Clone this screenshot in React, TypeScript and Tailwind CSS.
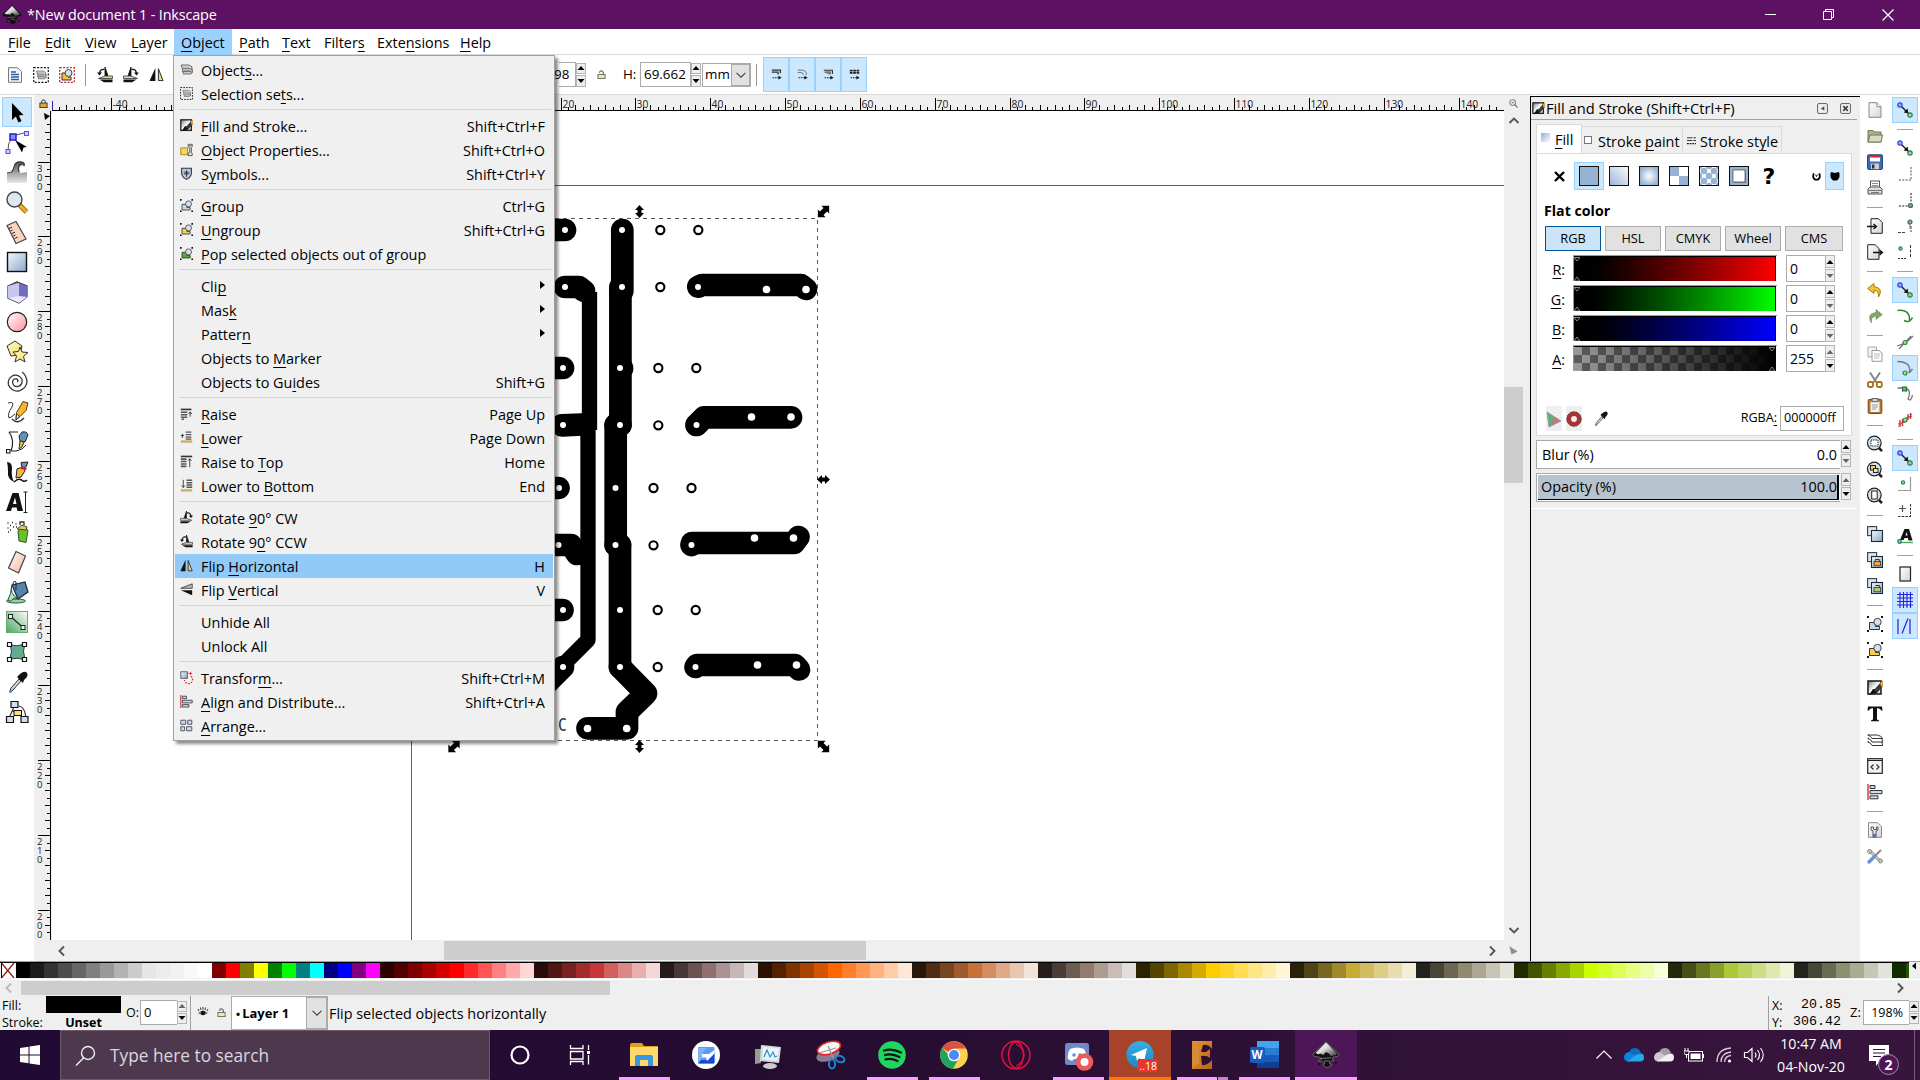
import React from "react";

type Kids = { children?: React.ReactNode };

function Svg({ s = 16, vb = 16, className = "", children }: { s?: number; vb?: number; className?: string } & Kids) {
  return (
    <svg width={s} height={s} viewBox={`0 0 ${vb} ${vb}`} className={"block shrink-0 overflow-visible " + className} fill="none">
      {children}
    </svg>
  );
}

/* Label with a mnemonic: the character after "_" is underlined. */
function Mn({ t }: { t: string }) {
  const i = t.indexOf("_");
  if (i < 0) return <span>{t}</span>;
  return (
    <span>
      {t.slice(0, i)}
      <span className="underline decoration-1 underline-offset-[3px] [text-decoration-skip-ink:none]">{t[i + 1]}</span>
      {t.slice(i + 2)}
    </span>
  );
}

/* ---------- shared gradients ---------- */
function Defs() {
  return (
    <svg width="0" height="0" className="absolute">
      <defs>
        <linearGradient id="blu" x1="0" y1="0" x2="1" y2="1"><stop offset="0" stopColor="#f4f8fc" /><stop offset="1" stopColor="#86a9c9" /></linearGradient>
        <linearGradient id="blu2" x1="0" y1="1" x2="1" y2="0"><stop offset="0" stopColor="#97b3d3" /><stop offset="1" stopColor="#fff" /></linearGradient>
        <radialGradient id="rad"><stop offset="0" stopColor="#fff" /><stop offset="1" stopColor="#97b3d3" /></radialGradient>
        <linearGradient id="pink" x1="0" y1="0" x2="1" y2="1"><stop offset="0" stopColor="#fff" /><stop offset="1" stopColor="#ff8f9a" /></linearGradient>
        <linearGradient id="yel" x1="0" y1="0" x2="1" y2="1"><stop offset="0" stopColor="#fffde0" /><stop offset="1" stopColor="#f5d94e" /></linearGradient>
        <linearGradient id="grn" x1="1" y1="0" x2="0" y2="1"><stop offset="0" stopColor="#fff" /><stop offset="1" stopColor="#4aa55e" /></linearGradient>
        <linearGradient id="mesh" x1="0" y1="0" x2="1" y2="1"><stop offset="0" stopColor="#6b9cc0" /><stop offset="1" stopColor="#5cb85f" /></linearGradient>
        <linearGradient id="peach" x1="0" y1="0" x2="1" y2="1"><stop offset="0" stopColor="#fff" /><stop offset="1" stopColor="#f2b49a" /></linearGradient>
        <linearGradient id="gry" x1="0" y1="0" x2="0" y2="1"><stop offset="0" stopColor="#555" /><stop offset="1" stopColor="#e8e8e8" /></linearGradient>
        <linearGradient id="page" x1="0" y1="0" x2="1" y2="1"><stop offset="0" stopColor="#fff" /><stop offset="1" stopColor="#d4d4d0" /></linearGradient>
        <linearGradient id="ink" x1="0" y1="0" x2="1" y2="1"><stop offset="0" stopColor="#fff" /><stop offset=".45" stopColor="#ddd" /><stop offset="1" stopColor="#333" /></linearGradient>
        <linearGradient id="pen" x1="0" y1="0" x2="1" y2="1"><stop offset="0" stopColor="#777" /><stop offset=".5" stopColor="#fff" /><stop offset="1" stopColor="#ccc" /></linearGradient>
        <linearGradient id="tele" x1="0" y1="0" x2="0" y2="1"><stop offset="0" stopColor="#37aee2" /><stop offset="1" stopColor="#1e88c7" /></linearGradient>
        <linearGradient id="eag" x1="0" y1="0" x2="1" y2="1"><stop offset="0" stopColor="#e8932f" /><stop offset="1" stopColor="#b5651d" /></linearGradient>
      </defs>
    </svg>
  );
}

function InkLogo({ s, rim }: { s: number; rim: string }) {
  return (
    <Svg s={s} vb={28}>
      <path d="M14 1 L27 13 Q27 16 21 16 L20 18 Q24 19 20 20 L17 22 L20 24 L15 27 L11 24 L13 22 L9 20 L6 20 Q7 18 10 18 L7 16 Q1 16 1 13 Z" fill="#111" stroke={rim} strokeWidth="0.6" />
      <path d="M14 1.500 L3.500 12 Q6 14 9 12.500 L11 14 L14 11 L17 12.500 L19 15 L24 14 L25 12.500 Z" fill="url(#ink)" />
      <path d="M8 17.500 L19 16.800 M12 20 h6" stroke="#777" strokeWidth="1" />
      <circle cx="24" cy="22" r="1" fill="#111" /><circle cx="7" cy="23" r="1" fill="#111" />
    </Svg>
  );
}

/* ---------- small 16px icons ---------- */
const node = (x: number, y: number, c = "#2e8b3d", f = "#9fdca6", r = 2) => <circle cx={x} cy={y} r={r} fill={f} stroke={c} strokeWidth="1.2" />;
const lens = (inner: React.ReactNode) => (
  <>
    <path d="M11 11 L15 15.2" stroke="#222" strokeWidth="2.6" />
    <circle cx="7.3" cy="7" r="6.8" fill="#cfe0f0" stroke="#222" strokeWidth="1.2" />
    {inner}
  </>
);
const twoSq = (inner?: React.ReactNode) => (
  <>
    <rect x=".6" y=".6" width="9" height="9" fill="#dbe6f1" stroke="#333f4d" strokeWidth="1.1" />
    <rect x="4.5" y="4.5" width="11" height="11" fill="url(#blu)" stroke="#1f2933" strokeWidth="1.1" />
    {inner}
  </>
);
const corners = <path d="M0 0h2v2H0zM14 0h2v2h-2zM0 14h2v2H0zM14 14h2v2h-2z" fill="#111" />;
const grp = (f: string) => (
  <>
    {corners}
    <path d="M2.5 6.5h6v4h4v3h-10z" fill={f} stroke="#333" strokeWidth="1" />
    <circle cx="10.5" cy="6" r="3.7" fill="#d3e0ee" stroke="#444" strokeWidth="1" />
  </>
);
const stack = (
  <>
    <path d="M4 10.500v3h9l2-1.500v-3" fill="#ccc" stroke="#555" />
    <path d="M3 7v3.500h9.500l2.500 1V7" fill="#ddd" stroke="#555" />
    <path d="M1.500 2.500h9.500l3.500 2v3.500l-2-1H3z" fill="#eee" stroke="#444" />
    <path d="M3 5h9M4 9h9" stroke="#888" />
  </>
);
const fillPen = (
  <>
    <rect x="1" y="1" width="13" height="13" fill="url(#pen)" stroke="#222" strokeWidth="1.6" />
    <path d="M2 15 L6 9 L10 9 L10 13 Z" fill="#111" />
    <path d="M7 10 L13 3 L16 1 L16 6 L10 13 Z" fill="#3a3a32" />
    <path d="M13 3 L16 .5 V6 L14.5 7 Z" fill="#e2a52c" />
  </>
);
const rot = (flip: boolean) => (
  <g transform={flip ? "translate(16 0) scale(-1 1)" : undefined}>
    <path d="M8 0V10.500H11.500z" fill="#111" stroke="#111" strokeWidth=".8" />
    <path d="M1.500 11.500L8 9h7.500v2.500z" fill={flip ? "#cdd8e4" : "#ead38b"} stroke="#333" strokeWidth=".8" />
    <path d="M2.500 12.500h13v2.700H7z" fill="#111" />
    <path d="M7.500 2.500Q3 1.500 2.500 6.500" stroke="#111" strokeWidth="1.300" /><path d="M0 5.500h5L2.500 8.500z" fill="#111" />
  </g>
);
const magnetPair = (
  <>
    <path d="M4 4 L12 12" stroke="#111" strokeWidth="1.3" /><path d="M11.300 11.300 L10.600 6.600 L6.600 10.600z" fill="#111" />
    {node(3, 3, "#3344dd", "#9aa4ff", 2.2)}{node(13, 13, "#2d8049", "#9fd0b0", 2.2)}
  </>
);
const dashCorner = (c: string) => <path d="M14 1V14H1" stroke={c} strokeWidth="1.5" strokeDasharray="2 1.3" />;

const IC: Record<string, React.ReactNode> = {
  objects: stack,
  selsets: <><rect x=".7" y=".7" width="14.6" height="14.6" stroke="#222" strokeWidth="1.2" strokeDasharray="2 1.4" /><g transform="translate(2.5 2.3) scale(.7)">{stack}</g></>,
  fill: fillPen,
  props: <><rect x="1" y="6" width="8.5" height="8.5" fill="#f4d35e" stroke="#9a7b14" /><path d="M10 1.5v3l2 1v6l-2 1v3h5v-3l-1-1v-6l1-1v-3h-1.5v2H12V1.5z" fill="#ddd" stroke="#444" /></>,
  symbols: <><path d="M2 1.5h12v7Q13 13 8 15.2 3 13 2 8.500z" fill="#b9c9da" stroke="#334" strokeWidth="1.3" /><path d="M8 4v8M4.500 7.500h7M6 5.500l4 4M10 5.500l-4 4" stroke="#334" strokeWidth="1.2" /></>,
  group: grp("#c5d7e8"), ungroup: grp("#f5d04e"), pop: grp("#4fae3a"),
  raise: <><path d="M1 3h13" stroke="#333" strokeWidth="2" /><path d="M1 6.5h8M1 9.500h8M1 12.500h8M2 15h3" stroke="#555" strokeWidth="1.8" /><path d="M12.500 12V6.500M10.500 8.500l2-2.500 2 2.500" stroke="#222" /></>,
  lower: <><path d="M1 13h14" stroke="#c9b26b" strokeWidth="3" /><path d="M7 1.500h7M7 4.500h7M7 7.500h7M7 10h7" stroke="#555" strokeWidth="1.6" /><path d="M1 5.500h4M3 3.500v5" stroke="#222" /></>,
  top: <><path d="M1 1.800h14" stroke="#333" strokeWidth="2" /><path d="M1 5h7M1 8h7M1 11h7M1 14h7" stroke="#555" strokeWidth="2" /><path d="M12 15V5M10 7l2-2.500L14 7" stroke="#222" /></>,
  bottom: <><path d="M1 14h14" stroke="#c9b26b" strokeWidth="3" /><path d="M8 1.500h7M8 4.500h7M8 7.500h7M8 10.200h7" stroke="#555" strokeWidth="1.8" /><path d="M4 1v9M2 8l2 2.500L6 8" stroke="#222" /></>,
  cw: rot(true), ccw: rot(false),
  fliph: <><path d="M6.800 1v14H0.500z" fill="#111" /><path d="M10 1.800v12.700h5z" fill="#ead38b" stroke="#222" /></>,
  flipv: <><path d="M15 1v5.500H1z" fill="#bbb" stroke="#333" /><path d="M15 15V9H1z" fill="#111" /></>,
  transform: <><rect x="1" y="1" width="8" height="8" fill="url(#blu)" stroke="#445" /><path d="M13.500 6.500A5 5 0 1 1 5.500 11" stroke="#d22" strokeWidth="1.400" strokeDasharray="2 1.500" /><path d="M10.500 3h4.500M13 1v4" stroke="#d22" /></>,
  align: <><path d="M1 0v16" stroke="#c33" strokeWidth="1.400" /><path d="M3 1.500h5v3H3zM3 6.500h12v3.200H3zM3 11.800h8v3H3z" fill="#cfdbe8" stroke="#333" /></>,
  arrange: <path d="M1 1.500h6v5H1zM9.500 1.500h5v5h-5zM1 9.500h4.500v5H1zM8 9.500h6.500v5H8z" fill="#cfdbe8" stroke="#556" strokeWidth="1.200" />,
  newdoc: <><path d="M2 .7h8L14 4.700V15.300H2z" fill="url(#page)" stroke="#888" /><path d="M10 .7V4.700h4" stroke="#888" fill="#fff" /></>,
  open: <><path d="M1 2.500h5l1 1.500h7v10H1z" fill="#a9b58c" stroke="#6e7758" /><path d="M3 7h12.500l-1.500 7H1z" fill="#d5dcc2" stroke="#6e7758" /></>,
  save: <><rect x=".6" y=".8" width="14.800" height="14.600" rx="1" fill="#3a6fb5" stroke="#1c3d6e" /><rect x="3" y="1" width="10" height="6.500" fill="#fff" /><path d="M3 1h10v2.500H3z" fill="#d22" /><rect x="4" y="9.500" width="8" height="5.700" fill="#ccc" /><rect x="5" y="10.500" width="2.400" height="4" fill="#234" /></>,
  print: <><rect x="3.500" y="1" width="9" height="8" fill="#fff" stroke="#555" /><path d="M5 3.500h6M5 5.500h6" stroke="#888" /><path d="M1 9l2-2h10l2 2v5H1z" fill="#ddd" stroke="#555" /><path d="M1 10.500h14M4 12.500h8" stroke="#777" /></>,
  imp: <><path d="M4 .7h7.500L15.300 4.500V15.300H4z" fill="url(#page)" stroke="#222" /><path d="M0 8.500h9M6.500 6l3 2.500-3 2.500" stroke="#111" strokeWidth="1.300" /></>,
  exp: <><path d="M.7 .7h7.500L12 4.500V15.300H.7z" fill="url(#page)" stroke="#222" /><path d="M6 8.500h9M12.500 6l3 2.500-3 2.500" stroke="#111" strokeWidth="1.300" /></>,
  undo: <path d="M7 1.500L.7 6.500 7 11.500V8.600Q12 8 11.500 15 17 6 7 4.600z" fill="#edc531" stroke="#a37d0c" />,
  redo: <path d="M9 1.500L15.300 6.500 9 11.500V8.600Q4 8 4.500 15 -1 6 9 4.600z" fill="#7fa86c" stroke="#5c7d4c" strokeDasharray="1 1" />,
  copy: <><path d="M1 1h8.500v10H1z" fill="#f4f4f4" stroke="#aaa" /><path d="M5 4.500h7L15 7v8.300H5z" fill="#fff" stroke="#999" /><path d="M7 8h6M7 10h6M7 12h5" stroke="#bbb" /></>,
  cut: <><path d="M3 .5l6.500 10M13 .5L6.500 10.500" stroke="#888" strokeWidth="2" /><rect x="1" y="10" width="5" height="5" rx="1.500" stroke="#a8701c" strokeWidth="1.900" /><rect x="9.800" y="10" width="5" height="5" rx="1.500" stroke="#a8701c" strokeWidth="1.900" /></>,
  paste: <><rect x="1.200" y="1.500" width="13.600" height="14" rx="1" fill="#b4742a" stroke="#7a4a12" /><rect x="3.500" y="3.500" width="9" height="10.500" fill="#f3f3f0" /><rect x="5" y=".5" width="6" height="3.200" fill="#ccc" stroke="#666" /><path d="M5 7h6M5 9h6M5 11h4" stroke="#999" /></>,
  zsel: lens(<rect x="4" y="4" width="7" height="6" fill="#fff" stroke="#111" strokeDasharray="1.200 1" />),
  zdraw: lens(<><rect x="3.500" y="3.500" width="5" height="4.500" fill="#f5d04e" stroke="#222" /><rect x="6.500" y="6.500" width="4.500" height="4" fill="#f8e9a0" stroke="#222" /></>),
  zpage: lens(<rect x="4.700" y="3" width="5.500" height="8" fill="#fff" stroke="#222" />),
  dup: twoSq(),
  clone: twoSq(<><rect x="7" y="9.500" width="6.500" height="4.300" fill="#f5a623" stroke="#333" strokeWidth=".8" /><path d="M8.300 9.500V7.500h4v2" stroke="#333" /></>),
  unclone: twoSq(<><rect x="7" y="9.500" width="6.500" height="4.300" fill="#a6ce7b" stroke="#333" strokeWidth=".8" /><path d="M8.300 7.500h4v2" stroke="#333" /></>),
  text: <path d="M1 .5h14l.5 4h-1.300Q13.500 2.500 11 2.300H10v10.500q0 1.500 2 1.500v1H4v-1q2 0 2-1.500V2.300H5Q2.500 2.500 1.800 4.500H.5z" fill="#111" />,
  layers: <><path d="M.7 3h9.800q4 1 5 3.500H5Q4 4 .7 3z" fill="#fafafa" stroke="#333" /><path d="M2 6l-1.300.5Q4 7 5 10h10.500L15 6.500M2 9.500l-1.300.5Q4 10.500 5 13.500h10.500L15 10" stroke="#333" /></>,
  xml: <><rect x=".7" y=".7" width="14.600" height="14.600" fill="#eef3f8" stroke="#222" strokeWidth="1.200" /><path d="M1 2.500h14" stroke="#222" /><path d="M6.500 6.500L4 9l2.500 2.500M9.500 6.500L12 9l-2.500 2.500" stroke="#333" strokeWidth="1.200" /></>,
  docprops: <><path d="M1.500 .7h9l4 4v10.600h-13z" fill="url(#page)" stroke="#888" /><path d="M4 5v3l2 1v6h3V9l2-1V5H9.500v2.500h-3V5z" fill="#e8e8e8" stroke="#555" /><path d="M6 12h3v3.500H6z" fill="#4a77c0" /></>,
  prefs: <><path d="M2 2l12 12" stroke="#777" strokeWidth="2.600" /><path d="M2 2l12 12" stroke="#ddd" strokeWidth="1.200" /><path d="M14 2L8 8" stroke="#888" strokeWidth="2" /><path d="M7.500 8.500L2 14" stroke="#6d93cf" strokeWidth="3.400" strokeLinecap="round" /><circle cx="2.500" cy="3.500" r="2" stroke="#888" /><circle cx="13.500" cy="13" r="2" stroke="#888" /></>,
  mag: magnetPair,
  bb: dashCorner("#6c9a6c"),
  bbe: <>{dashCorner("#666")}{node(13.500, 13.500, "#4b6b52", "#88a890", 2)}</>,
  bbc: <><path d="M1 14.500h8M14 8v6" stroke="#444" strokeDasharray="3 1" /><path d="M13 2v9" stroke="#777" />{node(13, 4, "#4b6b52", "#88a890", 2)}</>,
  bbm: <><path d="M1 14.500h9" stroke="#333" strokeDasharray="2 1" /><path d="M13.500 1v13" stroke="#333" strokeDasharray="3 1.500" />{node(3.500, 4.500, "#4b7b56", "#88c090", 1.600)}</>,
  curve: <path d="M.5 2.500Q13 1 12.500 12M7 12.500q6 3 8.500-3" stroke="#1f8a35" strokeWidth="1.500" />,
  cross: <><path d="M0 12Q9 10 16 2M2 15L14 2" stroke="#777" strokeWidth="1.200" />{node(8, 8.500)}</>,
  cusp: <><path d="M.5 1.500Q14 2 12.500 11Q11 15 15.500 9" stroke="#777" strokeWidth="1.300" />{node(8, 13)}</>,
  smooth: <><path d="M.5 2h7Q15 3 11 13q3 3 4.500-4" stroke="#777" strokeWidth="1.300" /><rect x="5.500" y="1" width="4" height="4" fill="#5cb86a" stroke="#236b33" /></>,
  mid: <><path d="M1 15L15 2" stroke="#999" /><path d="M3 8v7M5.500 7v7M11 2v6M13.500 1v6M1 12l7-2M9 6l6-2" stroke="#c92a2a" strokeWidth="1.300" />{node(8, 8)}</>,
  center: <><path d="M13.500 1v13.500H1" stroke="#999" strokeWidth="1.200" />{node(6, 6.500, "#2e8b3d", "#9fdca6", 1.600)}</>,
  rotc: <><path d="M13.500 2v13M1 14.500h12" stroke="#333" strokeDasharray="2.500 1.200" /><path d="M2 6.500h7M5.500 3v7" stroke="#555" strokeWidth="1.200" /></>,
  baseline: <><path d="M1 14.500h15" stroke="#4cae5a" strokeWidth="1.400" /><path d="M3 12L7.500 1h4.500l3.500 11.500h-4L10.800 10H7.500L6.700 12z M8.500 7.500h2L9.700 4z" fill="#111" fillRule="evenodd" />{node(2.500, 13.500, "#1f6b8a", "#9fdca6", 1.800)}</>,
  pageb: <rect x="3" y="1" width="10.500" height="14" fill="url(#page)" stroke="#222" strokeWidth="1.200" />,
  grid: <path d="M3 0v16M6.500 0v16M10 0v16M13.500 0v16M0 2.500h16M0 6h16M0 9.500h16M0 13h16" stroke="#2222e0" strokeWidth="1.100" />,
  guide: <path d="M1 1v15M13 1v15M5 15.500L11 .5" stroke="#2222e0" strokeWidth="1.200" />,
};

/* ---------- 22px toolbox icons ---------- */
const TOOLS: React.ReactNode[] = [
  <path d="M6 2V19L9.800 15.500 12.500 21.500 15.500 20 12.800 14.500 17.500 14z" fill="#000" />,
  <><path d="M2 20Q1 4 18 2" stroke="#555" /><rect x="4" y="3" width="6" height="6" fill="#8b8bf5" stroke="#22c" strokeWidth="1.500" /><rect x="18.500" y=".5" width="4" height="4" fill="#ccf" stroke="#55d" /><rect x="0" y="18.500" width="4" height="4" fill="#ccf" stroke="#55d" /><path d="M9 9l12 7-3.500.5-1.500 5z" fill="#000" /></>,
  <><path d="M1 12Q7 12 8 6q1-6 8-5 4 1 2 4-3-2-5 1-2 4 2 6l6-1v11H1z" fill="url(#gry)" /><path d="M1 12Q7 12 8 6q1-6 8-5 3 1 2 4M16 3q-5 1-3 8" stroke="#333" strokeWidth="1.200" /></>,
  <><path d="M13.500 14L20.500 21" stroke="#8a5a00" strokeWidth="5" /><path d="M14 14.500L20.500 21" stroke="#f5a623" strokeWidth="3.400" /><circle cx="8.500" cy="8.500" r="7.500" fill="#dce9f4" stroke="#444" strokeWidth="1.400" /></>,
  <><path d="M1 4.500L10 0.500 20 18 10 22.500z" fill="#f8d4c2" stroke="#444" strokeWidth="1.200" /><path d="M3 7.500l3-1.400M4.500 10l2-1M6 12.500l3-1.400M7.300 15l2-1M8.600 17.500l3-1.400" stroke="#222" /></>,
  <rect x="1.500" y="1.500" width="19" height="19" fill="url(#blu)" stroke="#111" strokeWidth="1.400" />,
  <><path d="M2 5l9-4 10 4v11l-8 6-11-5z" fill="#8888cf" stroke="#333" strokeWidth="1.200" /><path d="M2 5L13 2v14L2 17z" fill="#c8c8ee" /><path d="M13 2l8 3v11l-8 6z" fill="#6f6fbd" /><path d="M2 17l11-2 8 1-8 6z" fill="#e8e8ff" /></>,
  <circle cx="11" cy="11" r="9.700" fill="url(#pink)" stroke="#222" strokeWidth="1.200" />,
  <><path d="M1 5l8-5 7 5-2 9-9 1z" fill="url(#yel)" stroke="#333" /><path d="M14 6l2 5 6 .5-4.500 4L19 21l-5-3-5 3 1.500-6L7 11l5.500-.5z" fill="url(#yel)" stroke="#333" /></>,
  <path d="M11 11q2-1 0-3-4-1-4.500 3Q7 16 12 15.500 17 14 16 8.500 13 3 7 4.500 1 8 2.500 14 6 21 13 20 21 17 21 10 20 4 16 1" stroke="#333" strokeWidth="1.300" />,
  <><path d="M2 2q7-2 4 4-5 7-3 11 3-1 6-4" stroke="#333" /><path d="M6 18q6 6 12-1" stroke="#333" strokeWidth="1.400" /><path d="M10 19L10.500 11.500 17 0.500 22 2 20 9.500 14 15.500z" fill="#f5b52c" stroke="#5a3c00" /><path d="M10 19l.5-6 3 2z" fill="#fff" stroke="#333" /></>,
  <><path d="M3 1h9M3 1q6 8 2 19M5 20h5" stroke="#222" strokeWidth="1.200" /><rect x=".5" y="18.500" width="3.500" height="3.500" fill="#fff" stroke="#111" /><path d="M10 20q7-1 10-6" stroke="#222" /><path d="M16 1q5-1 6 3l-3 7-5-1-1-5z" fill="#5d93b8" stroke="#223" /><path d="M14 10l4 1-2 5-3 2z" fill="#e8bd4a" stroke="#333" /></>,
  <><path d="M1 1q5 0 5 6-1 8 2 14-7-3-6-11 0-5-1-9z" fill="#111" /><path d="M8 21q5-5 9-1 2 1 4-1" stroke="#111" strokeWidth="1.400" /><path d="M10 17l1-9 6-2 2 4-4 6z" fill="#f2b63a" stroke="#222" /><path d="M15 1.500l7-.5-2 5-4 1z" fill="#5d93b8" stroke="#223" /><path d="M15 5l6 2-1 2-5-1z" fill="#c22" /></>,
  <><path d="M0 20L6.500 2h6L17 20h-5.500l-.9-3.500H6L5 20zM7 13h3.500L9 6.500z" fill="#111" fillRule="evenodd" /><path d="M17.500 1h4M19.500 1v20.500M17.500 21.500h4" stroke="#222" /></>,
  <><path d="M12 10l4-3 6 2-2 12.500-7-1.500z" fill="#6cc02f" stroke="#2d5d10" /><path d="M11 8l5-4 5 2-1 3z" fill="#e9c64f" stroke="#444" /><path d="M14 4v-3h4v3" stroke="#333" strokeWidth="1.300" /><path d="M1.500 2h1M4 4.500h1M1.500 7h1M6 1.500h1M7 6h1M4 9h1M9.500 3h1M10 6h1M2 11h1" stroke="#222" strokeWidth="1.500" /></>,
  <path d="M10 0.500L19.500 5 12.500 22 2.500 17z" fill="url(#peach)" stroke="#444" strokeWidth="1.200" />,
  <><ellipse cx="10" cy="20" rx="9.500" ry="2" fill="#9bd0a8" stroke="#1f5b33" /><path d="M6 4l13-3 3 10-10 7z" fill="#4f87ad" stroke="#223" strokeWidth="1.200" /><path d="M6 4q-3 8 6 14l-4-1q-4 5-6 2 3-6 4-15z" fill="#b8e0c2" stroke="#1f5b33" /><path d="M10 9V1q-3-2-3 3" stroke="#222" /></>,
  <><rect x=".5" y=".5" width="21" height="21" fill="url(#grn)" stroke="#5fae70" /><path d="M4.500 5.500L17 16.500" stroke="#222" strokeWidth="1.200" /><rect x="2.500" y="3.500" width="4" height="4" fill="#eee" stroke="#222" /><rect x="15" y="14.500" width="4" height="4" fill="#dfd" stroke="#222" /></>,
  <><path d="M4 3q7 4 15-1-3 8 0 17-7-3-15-1 3-8 0-15z" fill="url(#mesh)" stroke="#333" /><path d="M1.500 1.500h4v4h-4zM16.500 1.500h4v4h-4zM1.500 16.500h4v4h-4zM16.500 16.500h4v4h-4z" fill="#fff" stroke="#111" strokeWidth="1.200" /></>,
  <><path d="M5 17l8-9 2 2-8 9q-3 3-3 1z" fill="#c3d7e8" stroke="#333" /><path d="M11 6l6 6 1-3q5-4 3-7t-7 1z" fill="#111" /><circle cx="4.500" cy="20.500" r="1.500" fill="#4a88c7" /></>,
  <><path d="M8 6L3 17M13 5q6 1 7 12M7 10l4 3" stroke="#333" strokeWidth="1.200" /><path d="M5 .5h7v6H5zM.5 15.500h7v6h-7zM15 15.500h7v6h-7z" fill="#cfdff0" stroke="#111" strokeWidth="1.200" /><rect x="8" y="9.500" width="7.500" height="5" fill="#f9e07a" stroke="#111" /></>,
];

/* ---------- spinner ---------- */
function Spin({ h, up = true, down = true }: { h: string; up?: boolean; down?: boolean }) {
  return (
    <div className={"flex w-[10px] shrink-0 flex-col justify-between " + h}>
      <div className="flex flex-1 items-center justify-center border border-[#b5b5b5] bg-[#eee]">
        <svg width="8" height="4" viewBox="0 0 7 4" className="shrink-0"><path d="M3.500 0L7 4H0z" fill={up ? "#000" : "#666"} /></svg>
      </div>
      <div className="mt-px flex flex-1 items-center justify-center border border-[#b5b5b5] bg-[#eee]">
        <svg width="8" height="4" viewBox="0 0 7 4" className="shrink-0"><path d="M3.500 4L7 0H0z" fill={down ? "#000" : "#666"} /></svg>
      </div>
    </div>
  );
}

const Lock = () => (
  <Svg s={9} vb={10}><path d="M2.500 3Q4.500-1 7 2.500V5" stroke="#555" strokeWidth="1.200" /><rect x="1" y="5" width="8" height="4.500" fill="#f2e9a0" stroke="#666" /></Svg>
);

/* ---------- title and menus ---------- */
function TitleBar() {
  return (
    <div className="flex h-[29px] shrink-0 items-center bg-[#5c1163] text-white">
      <div className="ml-[2px] w-[22px]"><InkLogo s={20} rim="#111" /></div>
      <div className="ml-[3px] text-[14.400px] tracking-[-0.010em]">*New document 1 - Inkscape</div>
      <div className="ml-auto mr-[2px] flex">
        <div className="flex w-[58px] justify-center"><Svg s={11} vb={11}><path d="M0 5.500h11" stroke="#fff" /></Svg></div>
        <div className="flex w-[58px] justify-center"><Svg s={11} vb={11}><path d="M.5 2.500h8v8h-8zM2.500 2.500v-2h8v8h-2" stroke="#fff" /></Svg></div>
        <div className="flex w-[61px] justify-center"><Svg s={12} vb={12}><path d="M.5 .5l11 11M11.500 .5l-11 11" stroke="#fff" strokeWidth="1.200" /></Svg></div>
      </div>
    </div>
  );
}

function MenuBar() {
  const m: [string, string][] = [
    ["_File", "w-[37px]"], ["_Edit", "w-[40px]"], ["_View", "w-[46px]"], ["_Layer", "w-[50px]"], ["_Object", "w-[58px]"],
    ["_Path", "w-[43px]"], ["_Text", "w-[42px]"], ["Filter_s", "w-[53px]"], ["Exte_nsions", "w-[83px]"], ["_Help", "w-[46px]"],
  ];
  return (
    <div className="flex h-[26px] shrink-0 border-b border-[#d9d9d9] bg-white text-[14.400px] leading-[27px]">
      {m.map(([t, w], i) => (
        <div key={t} className={`${w} h-[26px] whitespace-nowrap pl-[7px] ${t === "_Object" ? "bg-[#99d1ff]" : ""} ${i === 0 ? "ml-px" : ""}`}><Mn t={t} /></div>
      ))}
    </div>
  );
}

const SEP = null;
const MENU: (null | [string, string, string])[] = [
  ["objects", "Object_s...", ""], ["selsets", "Selection se_ts...", ""], SEP,
  ["fill", "_Fill and Stroke...", "Shift+Ctrl+F"], ["props", "_Object Properties...", "Shift+Ctrl+O"], ["symbols", "S_ymbols...", "Shift+Ctrl+Y"], SEP,
  ["group", "_Group", "Ctrl+G"], ["ungroup", "_Ungroup", "Shift+Ctrl+G"], ["pop", "_Pop selected objects out of group", ""], SEP,
  ["", "Cli_p", ">"], ["", "Mas_k", ">"], ["", "Patter_n", ">"], ["", "Objects to _Marker", ""], ["", "Objects to Gu_ides", "Shift+G"], SEP,
  ["raise", "_Raise", "Page Up"], ["lower", "_Lower", "Page Down"], ["top", "Raise to _Top", "Home"], ["bottom", "Lower to _Bottom", "End"], SEP,
  ["cw", "Rotate _90° CW", ""], ["ccw", "Rotate 9_0° CCW", ""], ["fliph", "Flip _Horizontal", "H"], ["flipv", "Flip _Vertical", "V"], SEP,
  ["", "Unhide All", ""], ["", "Unlock All", ""], SEP,
  ["transform", "Transfor_m...", "Shift+Ctrl+M"], ["align", "_Align and Distribute...", "Shift+Ctrl+A"], ["arrange", "_Arrange...", ""],
];

function ObjectMenu() {
  return (
    <div className="absolute left-[173px] top-[55px] z-20 h-[686px] w-[382px] border border-[#a0a0a0] bg-[#f0f0f0] px-px pt-[2px] text-[14.450px] shadow-[3px_3px_3px_rgba(0,0,0,0.45)]">
      {MENU.map((r, i) =>
        r === null ? (
          <div key={i} className="h-2 pl-1 pr-[2px] pt-[3px]"><div className="h-px bg-[#d5d5d5]" /></div>
        ) : (
          <div key={i} className={`flex h-6 items-center pl-[5px] pr-[8px] ${r[0] === "fliph" ? "bg-[#91c9f7]" : ""}`}>
            <div className="-mt-[2px] w-[21px]">{r[0] && <Svg s={13}>{IC[r[0]]}</Svg>}</div>
            <div className="flex-1 whitespace-nowrap pt-[2px]"><Mn t={r[1]} /></div>
            {r[2] === ">" ? <svg width="5" height="8" viewBox="0 0 5 8" className="mr-0 -mt-[2px]"><path d="M0 0l5 4-5 4z" fill="#000" /></svg> : <div className="whitespace-nowrap pt-[2px]">{r[2]}</div>}
          </div>
        )
      )}
    </div>
  );
}

function ToolControls() {
  const scale = [
    <path d="M1 1.500h11v4M1 4h8v3" stroke="#333" strokeWidth="1.600" />,
    <path d="M1 1.500h5q6 0 6 6M1 4.500h4q3 0 3 3" stroke="#555" />,
    <><path d="M1 1.500h11v5" stroke="#333" strokeWidth="1.400" /><path d="M2 3h8v4H7Q7 5 2 5z" fill="#777" /></>,
    <path d="M1 2h12M1 5h12" stroke="#222" strokeWidth="2.400" strokeDasharray="3.500 .8" />,
  ];
  return (
    <div className="flex h-[40px] shrink-0 items-center border-b border-[#d9d9d9] bg-white text-[13.400px]">
      <div className="flex w-[560px] items-center">
        <div className="ml-[7px]"><Svg s={16}><path d="M1.500 .7h9l4 4v10.600h-13z" fill="#f4f8fc" stroke="#777" /><path d="M4 5h5M4 7.500h8M4 10h8M4 12.500h8" stroke="#2e5b9e" strokeWidth="1.300" /></Svg></div>
        <div className="ml-[10px]"><Svg s={16}><rect x=".7" y=".7" width="14.600" height="14.600" stroke="#111" strokeWidth="1.200" strokeDasharray="2 1.400" /><g transform="translate(2.500 2.300) scale(.7)">{stack}</g></Svg></div>
        <div className="ml-[10px]"><Svg s={16}><rect x=".7" y=".7" width="14.600" height="14.600" stroke="#c22" strokeWidth="1.300" strokeDasharray="2 1.400" /><path d="M3 6h6v4h3v3H3z" fill="#f5c23e" stroke="#333" /><circle cx="9.500" cy="6" r="3.500" fill="#d3e0ee" stroke="#444" /></Svg></div>
        <div className="ml-[10px] h-[22px] w-px bg-[#999]" />
        <div className="ml-[11px]"><Svg s={16}>{IC.ccw}</Svg></div>
        <div className="ml-[10px]"><Svg s={16}>{IC.cw}</Svg></div>
        <div className="ml-[10px]"><Svg s={15}>{IC.fliph}</Svg></div>
      </div>
      <div className="flex h-[25px] w-[17px] items-center border border-l-0 border-[#aaa] bg-white -ml-px -indent-[5px]">98</div>
      <Spin h="h-[24px]" />
      <div className="ml-[11px]"><Lock /></div>
      <div className="ml-[17px]">H:</div>
      <div className="ml-auto" />
      <div className="flex w-[1280px] items-center">
        <div className="flex h-[25px] w-[51px] items-center border border-[#aaa] pl-[3px]">69.662</div>
        <Spin h="h-[24px]" />
        <div className="ml-px flex h-[24px] w-[49px] items-center border border-[#aaa]">
          <div className="w-[28px] pl-[2px]">mm</div>
          <div className="flex h-[22px] flex-1 items-center justify-center border border-[#aaa] bg-[#e1e1e1]"><Svg s={10} vb={9}><path d="M.5 2.500l4 4 4-4" stroke="#444" /></Svg></div>
        </div>
        <div className="ml-[5px] h-[22px] w-px bg-[#999]" />
        <div className="ml-[6px] flex">
          {scale.map((g, i) => (
            <div key={i} className="flex h-[35px] w-[26px] items-center justify-center border border-[#99d1ff] bg-[#cce8ff]">
              <Svg s={11} vb={14}>{g}<path d="M2 11h8" stroke="#222" strokeWidth="1.300" strokeDasharray="2 1" /><path d="M9.500 8.500l4 2.500-4 2.500z" fill="#111" /></Svg>
            </div>
          ))}
        </div>
      </div>
    </div>
  );
}

function Toolbox() {
  return (
    <div className="flex w-[34px] shrink-0 flex-col bg-white pt-[2px]">
      {TOOLS.map((t, i) => (
        <div key={i} className={`ml-[2px] mr-[2px] flex h-[30px] items-center justify-center pr-px ${i === 0 ? "border border-[#99d1ff] bg-[#cce8ff]" : ""}`}><Svg s={22} vb={22}>{t}</Svg></div>
      ))}
    </div>
  );
}

/* ---------- rulers ---------- */
const U = 7.485;
function TopRuler() {
  const out: React.ReactNode[] = [];
  for (let v = -48; v <= 145; v++) {
    const x = Math.round(561 + (v - 20) * U - 52.500) + 0.5;
    const y = v % 10 === 0 ? 3 : v % 2 === 0 ? 10 : 12;
    out.push(<path key={v} d={`M${x} ${y}V15`} stroke="#000" />);
    if (v % 10 === 0) out.push(<text key={"t" + v} x={x + 1} y="12.500" fontSize="10.300" fill="#222">{v}</text>);
  }
  return (
    <svg width="1452" height="16" viewBox="0 0 1452 16" className="block shrink-0 font-['Open_Sans']">
      {out}<path d="M0 15.500H1452" stroke="#000" /><path d="M.5 6v9" stroke="#22c" />
    </svg>
  );
}
function LeftRuler() {
  const out: React.ReactNode[] = [];
  for (let v = 305; v >= 197; v--) {
    const y = Math.round(162 + (300 - v) * U - 111.500) + 0.5;
    const x = v % 10 === 0 ? 4 : v % 2 === 0 ? 11 : 13;
    out.push(<path key={v} d={`M${x} ${y}H17`} stroke="#000" />);
    if (v % 10 === 0) String(v).split("").forEach((c, k) => out.push(<text key={v + "-" + k} x="3" y={y + 9 + k * 9} fontSize="9.500" fill="#222">{c}</text>));
  }
  return (
    <svg width="18" height="829" viewBox="0 0 18 829" className="block shrink-0 bg-[#efefef] font-['Open_Sans']">
      {out}<path d="M16.500 0V829" stroke="#000" /><path d="M10 2l6 3-5 4z" fill="#000" />
    </svg>
  );
}

/* ---------- drawing ---------- */
const HOLES = [[565,230],[622,230],[565,287],[622,287],[698,287],[563,368],[620,368],[563,425],[620,425],[696.500,425],[559,488],[615.500,488],[558.500,545],[615.500,545],[691.500,545],[563,610],[620,610],[563,667],[620,667],[695.500,667]];
const BIG = [[766.500,289.500],[806,289.500],[751.500,417],[791,417],[754.500,538],[793.500,538],[757.500,665],[796.500,665],[587.500,728.500],[626.700,728.500]];
const RINGS = [[660.300,230],[698.300,230],[660.300,287],[658.300,368],[696.300,368],[658.300,425.300],[653.500,488],[691.500,488],[653.500,545.300],[657.700,610],[695.700,610],[657.700,667]];
const WIDE = [
  "M540 230H565", "M622.300 230V287", "M620.400 287V425", "M615.700 425V545", "M620 545V667", "M565 287H579L584 291",
  "M698.300 286.700L702 285H801L806 289", "M540 368H563", "M562 425.300L582 424.500", "M620.400 291H622.300", "M615.700 425H620.400", "M615.700 545H620",
  "M696.500 425L704 417.300H791", "M540 488H558.500", "M540 545H571L577 554", "M691.500 545L692 543H794L798.500 537", "M540 610H562.500",
  "M695.500 667L697 665H795L799 669.500", "M563 667L545 685", "M620 667L646 693.500L627 712V728.300H587.500", "M622 368V368.500",
];
const ARROWS: [number, number, number][] = [[639.500, 211.500, 90], [823.500, 211.500, -45], [823.500, 479.500, 0], [639.500, 746.500, 90], [823.500, 746.500, 45], [454, 746.500, -45]];

function Canvas() {
  return (
    <svg width="1452" height="829" viewBox="52 111 1452 829" className="block bg-white">
      <path d="M411.500 940V185.500H1504" stroke="#5f5f5f" fill="none" />
      <g fill="none" stroke="#000" strokeWidth="22.700" strokeLinecap="round" strokeLinejoin="round">{WIDE.map((d) => <path key={d} d={d} />)}</g>
      <g fill="none" stroke="#000" strokeWidth="15.300" strokeLinejoin="round"><path d="M589.500 292V430" /><path d="M588 424V640L563 665" /></g>
      <g fill="#fff">
        {HOLES.map(([x, y], i) => <circle key={i} cx={x} cy={y} r="3" />)}
        {BIG.map(([x, y], i) => <circle key={"b" + i} cx={x} cy={y} r="3.800" />)}
      </g>
      <g fill="#fff" stroke="#000" strokeWidth="2.100">{RINGS.map(([x, y], i) => <circle key={i} cx={x} cy={y} r="4.100" />)}</g>
      <text x="558" y="731" fontSize="17" fontFamily="'DejaVu Sans Mono', monospace" fill="#333" textLength="9" lengthAdjust="spacingAndGlyphs">C</text>
      <path d="M555 218.500H817.500V740.500H460" stroke="#555" fill="none" strokeDasharray="4 4" />
      {ARROWS.map(([x, y, r], i) => (
        <g key={i} transform={`translate(${x} ${y}) rotate(${r})`}>
          {r % 90 === 0 ? <path d="M-6.500 0L-1.500-4.500V-2H1.500V-4.500L6.500 0 1.500 4.500V2H-1.500V4.500z" fill="#000" /> : <path d="M-8 0L-2.500-5.500V-2.500H2.500V-5.500L8 0 2.500 5.500V2.500H-2.500V5.500z" fill="#000" />}
        </g>
      ))}
    </svg>
  );
}

const Chev = ({ d, c = "#555" }: { d: string; c?: string }) => <Svg s={10} vb={10}><path d={d} stroke={c} strokeWidth="1.900" /></Svg>;
const LEFT = "M7 .5L2.500 5 7 9.500", RIGHT = "M3 .5L7.500 5 3 9.500", UP = "M.5 7L5 2.500 9.500 7", DOWN = "M.5 3L5 7.500 9.500 3";

function Workspace() {
  return (
    <div className="flex w-[1496px] shrink-0 flex-col bg-[#efefef]">
      <div className="flex h-[16px]">
        <div className="flex w-[18px] items-center justify-center"><Svg s={9} vb={10}><path d="M3 5V2.500q2-3 4 0V5" stroke="#555" strokeWidth="1.200" /><rect x="1" y="4.500" width="8" height="5" fill="#e0a92e" stroke="#333" /></Svg></div>
        <TopRuler />
        <div className="pl-[5px] pt-[4px]"><Svg s={9} vb={10}><circle cx="4" cy="4" r="3.200" stroke="#888" strokeWidth="1.300" /><path d="M6 6l3.500 3.500M3 4h2" stroke="#777" strokeWidth="1.400" /></Svg></div>
      </div>
      <div className="flex h-[829px]">
        <LeftRuler />
        <Canvas />
        <div className="flex w-[19px] flex-col items-center py-[5px]">
          <Chev d={UP} />
          <div className="mt-[261px] h-[96px] w-full bg-[#cdcdcd]" />
          <div className="mt-auto"><Chev d={DOWN} /></div>
        </div>
      </div>
      <div className="mt-px flex h-[19px] items-center">
        <div className="ml-[23px] w-[387px]"><Chev d={LEFT} /></div>
        <div className="h-[19px] w-[422px] bg-[#cdcdcd]" />
        <div className="flex w-[631px] justify-end"><Chev d={RIGHT} /></div>
        <div className="ml-[12px]"><Svg s={9} vb={10}><path d="M1 1l8 5-6 3z" fill="#7a9a7a" stroke="#867" strokeDasharray="1 1" /></Svg></div>
      </div>
    </div>
  );
}

/* ---------- fill and stroke dock ---------- */
function ColorRow({ l, v, g, full }: { l: string; v: string; g: string; full?: boolean }) {
  return (
    <div className="flex h-[30px] items-start">
      <div className="w-[36px] pr-[8px] pt-[4px] text-right text-[14.300px]"><Mn t={"_" + l + ":"} /></div>
      <div className="h-[26px] w-[204px] border-l border-t border-t-[#999] border-l-[#999]">
        <div className={`relative h-[25px] w-[202px] border-r border-t border-black ${g}`}>
          <svg width="6" height="24" viewBox="0 0 6 24" className={full ? "absolute right-0 top-0" : "absolute left-0 top-0"}><path d="M0 .5h6L3 4zM0 24h6L3 20z" fill="#000" stroke="#aaa" strokeWidth=".8" /></svg>
        </div>
      </div>
      <div className="ml-[9px] flex h-[27px] w-[39px] items-center border border-r-0 border-[#aaa] pl-[3px] text-[14px]">{v}</div>
      <Spin h="h-[27px]" up={!full} down={!!full} />
    </div>
  );
}

function Dock() {
  const box = "flex h-[28px] w-[30px] shrink-0 items-center justify-center";
  const sq = (c: React.ReactNode) => <Svg s={20} vb={20}>{c}<rect x=".5" y=".5" width="19" height="19" stroke="#111" /></Svg>;
  const dots: React.ReactNode[] = [];
  for (let a = 0; a < 5; a++) for (let b = 0; b < 5; b++) if ((a + b) % 2 === 0) dots.push(<circle key={a + "-" + b} cx={a * 5} cy={b * 5} r="3.300" fill="#97b3d3" />);
  const tab = "flex items-center border-t border-r border-[#dadada] text-[14.450px] whitespace-nowrap";
  return (
    <div className="mt-px w-[330px] shrink-0 border-l border-t border-black bg-[#efefef]">
      <div className="flex h-[23px] w-[326px] items-center border-b border-[#a0a0a0] pl-px text-[14.700px]">
        <Svg s={13}>{fillPen}</Svg>
        <div className="ml-px w-[271px] whitespace-nowrap">Fill and Stroke (Shift+Ctrl+F)</div>
        <div className="flex w-[34px] justify-between">
          <Svg s={11} vb={12}><rect x=".6" y=".6" width="10.800" height="10.800" rx="1.500" stroke="#555" /><path d="M8 3.500v5L4 6z" fill="#555" /></Svg>
          <Svg s={11} vb={12}><rect x=".6" y=".6" width="10.800" height="10.800" rx="1.500" stroke="#555" /><path d="M3.500 3.500l5 5M8.500 3.500l-5 5" stroke="#444" strokeWidth="2" /></Svg>
        </div>
      </div>
      <div className="ml-[5px] mt-[4px] flex h-[29px] items-end">
        <div className={tab + " h-[29px] w-[46px] border-l bg-white pl-[4px]"}><div className="mb-[3px] h-[9px] w-[9px] bg-gradient-to-br from-[#8fb0d0] to-white" /><div className="ml-[5px] pt-[2px]"><Mn t="_Fill" /></div></div>
        <div className={tab + " h-[27px] w-[101px] pl-[2px]"}><div className="h-[8px] w-[8px] border border-[#777] bg-white" /><div className="ml-[6px] pt-[3px]"><Mn t="Stroke _paint" /></div></div>
        <div className={tab + " h-[27px] w-[99px] pl-[4px]"}><Svg s={9} vb={10}><path d="M0 2h10M0 5h10" stroke="#222" strokeDasharray="6 1" /><path d="M0 8.500h10" stroke="#111" strokeWidth="1.500" strokeDasharray="2 1" /></Svg><div className="ml-[4px] pt-[3px]"><Mn t="Stroke st_yle" /></div></div>
      </div>
      <div className="ml-[5px] flex h-[283px] w-[316px] flex-col border border-[#dadada] bg-white">
        <div className="ml-[7px] mt-[8px] flex items-center">
          <div className={box}><Svg s={11} vb={11}><path d="M1 1l9 9M10 1l-9 9" stroke="#000" strokeWidth="2.400" /></Svg></div>
          <div className={box + " border border-[#99d1ff] bg-[#cce8ff]"}>{sq(<rect width="20" height="20" fill="#97b3d3" />)}</div>
          <div className={box}>{sq(<rect width="20" height="20" fill="url(#blu2)" />)}</div>
          <div className={box}>{sq(<rect width="20" height="20" fill="url(#rad)" />)}</div>
          <div className={box}>{sq(<path d="M0 0h10v10H0zM10 10h10v10H10z" fill="#97b3d3" />)}</div>
          <div className={box}><div className="overflow-hidden">{sq(dots)}</div></div>
          <div className={box}>{sq(<><rect width="20" height="20" fill="#97b3d3" /><rect x="5" y="5" width="12" height="12" fill="#789" /><rect x="4" y="4" width="12" height="12" fill="#fff" stroke="#444" strokeWidth=".7" /></>)}</div>
          <div className={box + " font-['DejaVu_Sans'] text-[22px] font-bold"}>?</div>
          <div className="ml-[23px] flex w-[18px] justify-center"><Svg s={9} vb={10}><path d="M2 1.500Q0 6 3.500 8.500h3Q10 6 8 1.500" stroke="#000" strokeWidth="2" /><path d="M4 3l1 2 1-2" stroke="#000" /></Svg></div>
          <div className="flex h-[28px] w-[19px] items-center justify-center border border-[#99d1ff] bg-[#cce8ff]"><Svg s={10} vb={10}><path d="M1 1l4 1 4-1Q11 6 7 9.500H3Q-1 6 1 1z" fill="#000" /></Svg></div>
        </div>
        <div className="ml-[7px] mt-[10px] h-[21px] text-[14.200px] font-bold">Flat color</div>
        <div className="ml-[8px] mt-[5px] flex gap-[4px] text-[12.800px]">
          {["RGB", "HSL", "CMYK", "Wheel", "CMS"].map((b, i) => (
            <div key={b} className={`flex h-[25px] items-center justify-center border pt-px ${i === 0 ? "border-[#005499] bg-[#cce4f7]" : "border-[#adadad] bg-[#e1e1e1]"} ${i === 4 ? "w-[58px]" : "w-[56px]"}`}>{b}</div>
          ))}
        </div>
        <div className="mt-[4px] h-[120px]">
          <ColorRow l="R" v="0" g="bg-gradient-to-r from-black to-[#f00]" />
          <ColorRow l="G" v="0" g="bg-gradient-to-r from-black to-[#0f0]" />
          <ColorRow l="B" v="0" g="bg-gradient-to-r from-black to-[#00f]" />
          <ColorRow l="A" v="255" full g="bg-[linear-gradient(to_right,transparent,black),conic-gradient(#5c5c5c_25%,#9b9b9b_0_50%,#5c5c5c_0_75%,#9b9b9b_0)] bg-[length:100%_100%,16px_16px]" />
        </div>
        <div className="mt-[31px] flex items-center text-[12.600px]">
          <div className="ml-[9px] flex h-[25px] w-[16px] items-center bg-[#efefef]"><Svg s={16}><path d="M1 1l14 9-12 6z" fill="#5fae7c" stroke="#99a" /><path d="M5 14l9-4-6-4z" fill="#c77" /></Svg></div>
          <div className="ml-[4px] flex h-[25px] w-[16px] items-center bg-[#efefef]"><Svg s={16}><circle cx="8" cy="8" r="5.200" stroke="#a33" strokeWidth="4.600" /><circle cx="8" cy="8" r="7.300" stroke="#333" strokeWidth=".8" strokeDasharray="1 1" /></Svg></div>
          <div className="ml-[11px]"><Svg s={15} vb={22}>{TOOLS[19]}</Svg></div>
          <div className="ml-auto"><Mn t="RGBA_:" /></div>
          <div className="ml-[3px] mr-[7px] flex h-[25px] w-[64px] items-center border border-[#aaa] pl-[3px]">000000ff</div>
        </div>
      </div>
      <div className="ml-[5px] mt-[4px] flex w-[315px] items-start gap-px text-[14.400px]">
        <div className="flex h-[29px] flex-1 items-center justify-between border border-r-0 border-[#aaa] bg-white pl-[5px] pr-[3px]"><span>Blur (%)</span><span>0.0</span></div>
        <Spin h="h-[27px]" down={false} />
      </div>
      <div className="ml-[5px] mt-[4px] flex w-[315px] items-start gap-px text-[14.400px]">
        <div className="flex h-[29px] flex-1 border border-r-0 border-[#aaa] bg-white p-[1px]"><div className="flex flex-1 items-center justify-between border-b border-r-2 border-black bg-[#b7c4cf] pl-[3px]"><span>Opacity (%)</span><span>100.0</span></div></div>
        <Spin h="h-[27px]" up={false} />
      </div>
      <div className="mt-[6px] h-px w-[326px] bg-white" />
    </div>
  );
}

/* ---------- right icon bars; "-" is a separator, "!" marks an active button ---------- */
const CMD = "newdoc open save print - imp exp - undo redo - copy cut paste - zsel zdraw zpage - dup clone unclone - group ungroup - fill text layers xml align - docprops prefs".split(" ");
const SNAP = "!mag - mag bb bbe bbc bbm - !mag curve cross !cusp smooth mid - !mag center rotc baseline - pageb !grid !guide".split(" ");
function IconBar({ items }: { items: string[] }) {
  return (
    <div className="flex w-[30px] flex-col items-center bg-white pt-[2px]">
      {items.map((n, i) =>
        n === "-" ? (
          <div key={i} className="flex h-[12px] w-[16px] shrink-0 items-center"><div className="h-px w-full bg-[#a0a0a0]" /></div>
        ) : (
          <div key={i} className={`flex h-[26px] w-[26px] shrink-0 items-center justify-center ${n[0] === "!" ? "border border-[#99d1ff] bg-[#cce8ff]" : ""}`}><Svg>{IC[n.replace("!", "")]}</Svg></div>
        )
      )}
    </div>
  );
}

/* ---------- palette ---------- */
const PAL = ("000000 1a1a1a 333333 4d4d4d 666666 808080 999999 b3b3b3 cccccc e6e6e6 ececec f2f2f2 f9f9f9 ffffff 800000 ff0000 808000 ffff00 008000 00ff00 008080 00ffff 000080 0000ff 800080 ff00ff " +
  "2b0000 550000 800000 aa0000 d40000 ff0000 ff2a2a ff5555 ff8080 ffaaaa ffd5d5 280b0b 501616 782121 a02c2c c83737 d35f5f de8787 e9afaf f4d7d7 241c1c 483737 6c5353 916f6f ac9393 c8b7b7 e3dbdb " +
  "2b1100 552200 803300 aa4400 d45500 ff6600 ff7f2a ff9955 ffb380 ffccaa ffe6d5 28170b 502d16 784421 a05a2c c87137 d38d5f deaa87 e9c6af f4e3d7 241f1c 483e37 6c5d53 917c6f ac9d93 c8beb7 e3dedb " +
  "2b2200 554400 806600 aa8800 d4aa00 ffcc00 ffd42a ffdd55 ffe680 ffeeaa fff6d5 28220b 504416 786721 a0892c c8ab37 d3bc5f decd87 e9ddaf f4eed7 24221c 484537 6c6753 918a6f aca793 c8c4b7 e3e2db " +
  "222b00 445500 668000 88aa00 aad400 ccff00 d4ff2a ddff55 e5ff80 eeffaa f6ffd5 22280b 445016 677821 89a02c abc837 bcd35f cdde87 dde9af eef4d7 23241c 454837 676c53 8a916f a7ac93 c4c8b7 e2e3db 112b00 225500").split(" ");

function Palette() {
  return (
    <div className="shrink-0 bg-[#efefef]">
      <div className="flex h-[18px] border-t border-[#a0a0a0]">
        <div className="flex h-[16px] w-[1909px] overflow-hidden border-t border-black pl-px">
          <div className="mr-px h-[15px] w-[14px] shrink-0 bg-white"><svg width="14" height="15" viewBox="0 0 14 15" className="block"><path d="M.5 0L13 15M13 0L.5 15" stroke="#8a1a1a" strokeWidth="1.300" /><path d="M.5 0v15" stroke="#000" /></svg></div>
          {PAL.map((c, i) => <div key={i} className="h-[15px] w-[14px] shrink-0" style={{ backgroundColor: "#" + c }} />)}
        </div>
        <svg width="11" height="10" viewBox="0 0 11 10" className="bg-[#efefef]"><path d="M7 .5v7L3 4z" fill="#000" /></svg>
      </div>
      <div className="flex h-[17px] items-center border-t border-white">
        <div className="ml-[4px] w-[17px]"><Chev d={LEFT} c="#bbb" /></div>
        <div className="h-[14px] w-[589px] bg-[#cdcdcd]" />
        <div className="ml-auto mr-[15px]"><Chev d={RIGHT} /></div>
      </div>
    </div>
  );
}

function StatusBar() {
  return (
    <div className="flex h-[34px] shrink-0 bg-[#efefef] text-[12.500px] leading-[17px]">
      <div className="w-[46px] pl-[2px] pt-px"><div className="h-[17px]">Fill:</div><div>Stroke:</div></div>
      <div className="w-[75px] text-center font-bold"><div className="h-[17px] bg-black" /><div className="pt-px">Unset</div></div>
      <div className="flex items-center pb-[2px]">
        <div className="ml-[5px] w-[14px]">O:</div>
        <div className="flex h-[25px] w-[37px] items-center border border-r-0 border-[#aaa] bg-white pl-[3px] text-[13px]">0</div>
        <Spin h="h-[23px]" up={false} />
      </div>
      <div className="ml-[3px] w-px bg-[#a0a0a0]" />
      <div className="flex w-[40px] items-center pl-[7px] pb-[2px]">
        <Svg s={10} vb={10}><path d="M0 6Q5 1 10 6 5 10 0 6z" fill="#777" /><circle cx="5" cy="6" r="2.200" fill="#111" /><path d="M1 4L0 2M3 3L2.500 .500M5 2.500V0M7 3L7.500 .500M9 4l1-2" stroke="#333" /></Svg>
        <div className="ml-[9px]"><Lock /></div>
      </div>
      <div className="flex h-[34px] w-[97px] border border-[#aaa] bg-white">
        <div className="flex w-[74px] items-center pl-[4px] text-[13px] font-bold whitespace-nowrap"><span className="mr-[2px] text-[11px]">•</span>Layer 1</div>
        <div className="flex flex-1 items-center justify-center border border-[#aaa] bg-[#e1e1e1]"><Svg s={10} vb={9}><path d="M.5 2.500l4 4 4-4" stroke="#444" /></Svg></div>
      </div>
      <div className="ml-px flex items-center text-[14.400px]">Flip selected objects horizontally</div>
      <div className="ml-auto w-px bg-[#a0a0a0]" />
      <div className="w-[24px] pl-[3px] pt-px"><div className="h-[17px]">X:</div><div>Y:</div></div>
      <div className="w-[48px] pt-px text-right font-['Liberation_Mono'] text-[13.300px] leading-[16px]"><div className="h-[17px]">20.85</div><div>306.42</div></div>
      <div className="flex items-center pb-[2px]">
        <div className="ml-[9px] w-[13px] text-[13px]">Z:</div>
        <div className="flex h-[25px] w-[46px] items-center justify-end border border-r-0 border-[#aaa] bg-white pr-[6px]">198%</div>
        <Spin h="h-[23px]" />
        <div className="w-px" />
      </div>
    </div>
  );
}

/* ---------- Windows taskbar ---------- */
const APPS: [string, React.ReactNode][] = [
  ["on", <><path d="M0 4q0-2 2-2h10l2 3H28v20H0z" fill="#e09c1a" /><rect y="6" width="28" height="19" fill="#ffd867" /><path d="M5 25V16q0-2 2-2h14q2 0 2 2v9h-5v-6h-8v6z" fill="#3a96dd" /></>],
  ["", <><circle cx="14" cy="14" r="14" fill="#fff" /><rect x="6" y="6" width="16.500" height="16.500" rx="1" fill="#5b9bf8" /><path d="M6 22.500h15.500q1 0 1-1V12l-7 7H9z" fill="#1648d8" /><path d="M10 13h7l5.500-4v3.500L15 20l-1-3.500h-4z" fill="#fff" /><path d="M6 7l8 0-4 6v4l-4 5z" fill="#7db4fc" /></>],
  ["", <><path d="M1 8h6v14l-6 1z" fill="#999" /><path d="M7 4l20 2-2 16-19-2z" fill="#d9d9d9" /><path d="M9 6l16 1.500-1.500 12L8.500 18z" fill="#e9f4fb" /><path d="M10 16l3-7 3 7 3-5 2 5 2-1" stroke="#2a8fc7" strokeWidth="1.200" /><ellipse cx="16" cy="25" rx="7" ry="3" fill="#ccc" /><path d="M2 11h3" stroke="#5c3" /></>],
  ["", <><ellipse cx="12" cy="14" rx="12" ry="6" fill="#8d7a92" transform="rotate(-18 12 14)" /><ellipse cx="13" cy="7" rx="12" ry="6" fill="#f8f8f8" stroke="#d22" strokeWidth="1.600" transform="rotate(-18 13 7)" /><path d="M12 5l6 14M3 12l17-5" stroke="#999" strokeWidth="1.300" /><ellipse cx="24" cy="18" rx="4.500" ry="3" stroke="#1e86d0" strokeWidth="2" transform="rotate(20 24 18)" /><ellipse cx="16" cy="23" rx="3" ry="4.500" stroke="#1e86d0" strokeWidth="2" /></>],
  ["on", <><circle cx="14" cy="14" r="13.800" fill="#1ed760" /><path d="M6 9.500q8-2.500 17 2M7 14q7-2 14.500 2M7.500 18.300q6-1.500 12 1.700" stroke="#191414" strokeWidth="2.300" strokeLinecap="round" /></>],
  ["on", <><circle cx="14" cy="14" r="13.800" fill="#fdd14b" /><path d="M14 14L2 7A13.800 13.800 0 0 1 26 7.500H14z" fill="#dd5144" /><path d="M14 14h-5L2 7A13.800 13.800 0 0 0 13 27.800L19 17z" fill="#1da462" /><circle cx="14" cy="14" r="6.300" fill="#fff" /><circle cx="14" cy="14" r="5" fill="#4c8bf5" /></>],
  ["", <><circle cx="14" cy="14" r="14" stroke="#e01040" strokeWidth="1.500" /><ellipse cx="14" cy="14" rx="7.500" ry="13" stroke="#e01040" strokeWidth="1.500" /><path d="M14 3q8 4 8 11t-8 11" stroke="#e01040" strokeWidth="1.200" /></>],
  ["on", <><rect x="1" y="2" width="24" height="22" rx="2.500" fill="#7289c8" /><path d="M6 8q7-3 14 0 3 5 2 10l-4 2-2-2h-6l-2 2-4-2q-1-5 2-10z" fill="#fff" /><circle cx="10" cy="14" r="1.800" fill="#7289c8" /><circle cx="16" cy="14" r="1.800" fill="#7289c8" /><circle cx="20.500" cy="21" r="8.800" fill="#ee5a5a" /><circle cx="20.500" cy="21" r="4" fill="#fff" /></>],
  ["tele", <><circle cx="14" cy="13.500" r="13.600" fill="url(#tele)" /><path d="M5 14L21 7l-3 14-5-4-2 3-1-5z" fill="#fff" /><rect x="11.500" y="18" width="20" height="13" rx="2" fill="#e8362e" /><text x="13.500" y="28.500" fontSize="10.500" fill="#fff" fontFamily="'Open Sans', sans-serif">..18</text></>],
  ["two", <><path d="M4 0h20v8q-4-5-9-4l-2 7h5l4-3v9q-3-3-9-2l1 9q5 1 10-5v9H4z" fill="url(#eag)" /><path d="M4 0l7 6v16l-7 6z" fill="#d98a35" /></>],
  ["on", <><rect x="7" y="0" width="22" height="7" fill="#41a5ee" /><rect x="7" y="7" width="22" height="7" fill="#2b7cd3" /><rect x="7" y="14" width="22" height="7" fill="#185abd" /><rect x="7" y="21" width="22" height="6" fill="#103f91" /><rect x="0" y="6" width="15" height="16" rx="1.500" fill="#185abd" /><text x="1.500" y="18" fontSize="11.500" fontWeight="bold" fill="#fff" fontFamily="'Open Sans', sans-serif">W</text></>],
  ["ink", null],
];

function Taskbar() {
  return (
    <div className="flex h-[50px] shrink-0 bg-[linear-gradient(to_right,#210a33,#250c31_40%,#35133a_85%,#38153c)] text-white">
      <div className="flex w-[60px] items-center justify-center"><Svg s={20} vb={20}><path d="M0 3l8.500-1.300V9.500H0zM9.500 1.500L20 0v9.500H9.500zM0 10.500h8.500v7.800L0 17zM9.500 10.500H20V20L9.500 18.500z" fill="#fff" /></Svg></div>
      <div className="flex w-[430px] items-center border border-[#6d586d] bg-[#4d384d] pl-[14px] text-[17.300px] text-[#dcd6dc]">
        <Svg s={21} vb={21}><circle cx="13" cy="8" r="6.500" stroke="#eee" strokeWidth="1.400" /><path d="M8.500 13L1 20.500" stroke="#eee" strokeWidth="1.400" /></Svg>
        <div className="ml-[14px] pt-[2px]">Type here to search</div>
      </div>
      <div className="flex w-[60px] items-center justify-center"><Svg s={20} vb={20}><circle cx="10" cy="10" r="8.500" stroke="#fff" strokeWidth="2.200" /></Svg></div>
      <div className="flex w-[63px] items-center justify-center pr-[4px]"><Svg s={20} vb={20}><path d="M.5 0v3.500h12.500V0M.5 20v-3.500h12.500V20M.5 6.500h12.500v7.500H.5zM18.500 0v5M18.500 10v9.500" stroke="#fff" strokeWidth="1.300" /><rect x="17" y="6" width="3" height="3" fill="#fff" /></Svg></div>
      {APPS.map(([st, g], i) => (
        <div key={i} className={`flex w-[62px] shrink-0 flex-col items-center ${st === "tele" ? "bg-[#a6432a]" : st === "ink" ? "bg-[#4d1656]" : ""}`}>
          <div className="flex h-[47px] items-center pt-[3px]">{st === "ink" ? <InkLogo s={28} rim="#999" /> : <Svg s={28} vb={28}>{g}</Svg>}</div>
          {st === "on" && <div className="h-[3px] w-[51px] bg-[#f6a3fb]" />}
          {st === "two" && <div className="flex h-[3px] w-[51px] gap-px"><div className="w-[40px] bg-[#f6a3fb]" /><div className="flex-1 bg-[#c583cc]" /></div>}
          {st === "tele" && <div className="h-[3px] w-full bg-[#ff7800]" />}
          {st === "ink" && <div className="h-[3px] w-full bg-[#f6a3fb]" />}
        </div>
      ))}
      <div className="ml-auto flex items-center">
        <div className="flex w-[30px] justify-center"><Svg s={16}><path d="M.5 11.500L8 4l7.500 7.500" stroke="#fff" strokeWidth="1.200" /></Svg></div>
        {[["#0f6cbd", "#0a85d9", "#28a8ea"], ["#a89aa8", "#cfc6cf", "#f2eff2"]].map((c) => (
          <div key={c[0]} className="flex w-[30px] justify-center"><svg width="20" height="14" viewBox="0 0 20 14"><path d="M5 7Q5 0 11 0q4 0 6 5l-7 4z" fill={c[0]} /><path d="M0 9Q1 4 6 4l8 6-10 3.500Q0 13 0 9z" fill={c[1]} /><path d="M3 13.500L12 7q8-4 8 2.500 0 4-4 4z" fill={c[2]} /></svg></div>
        ))}
        <div className="flex w-[30px] justify-center"><svg width="20" height="14" viewBox="0 0 20 14" fill="none"><rect x="4.500" y="3.500" width="14" height="9.500" stroke="#fff" /><rect x="6.500" y="5.500" width="10" height="5.500" fill="#fff" /><path d="M19.500 6v4" stroke="#fff" /><path d="M1 0v3M4 0v3M0 3h5v2l-1 1.500H1L0 5zM2.500 6v4" stroke="#fff" fill="#35133a" /></svg></div>
        <div className="flex w-[30px] justify-center"><Svg s={16}><path d="M1 15Q1 2 15 1M5 15Q5 6 15 5M8.500 15Q9 9 15 8.500" stroke="#d8ccd8" strokeWidth="1.300" /><circle cx="13.500" cy="14" r="1.600" fill="#fff" /></Svg></div>
        <div className="flex w-[30px] justify-center"><Svg s={20} vb={20}><path d="M.5 7.500h3L8 3.500v13l-4.500-4h-3z" stroke="#fff" strokeWidth="1.200" /><path d="M11 7.500q2 2.500 0 5M13.500 5q4 5 0 10M16.500 3q5.500 7 0 14" stroke="#fff" strokeWidth="1.100" /></Svg></div>
        <div className="flex w-[84px] flex-col items-center text-[14.200px] leading-[23px]"><div>10:47 AM</div><div className="whitespace-nowrap">04-Nov-20</div></div>
        <div className="ml-[13px] h-[50px] w-[48px]">
          <svg width="48" height="50" viewBox="0 0 48 50" fill="none"><path d="M3 15h20v16H14l-4 5v-5H3z" fill="#fff" /><path d="M7 19.500h12M7 23h12M7 26.500h8" stroke="#35133a" /><circle cx="22.500" cy="34.500" r="10" fill="#4d1656" stroke="#a68aa8" /><text x="22.500" y="39.500" fontSize="14" fontWeight="bold" fill="#fff" textAnchor="middle" fontFamily="'Open Sans', sans-serif">2</text></svg>
        </div>
        <div className="mr-[5px] h-[50px] w-px bg-[#77597a]" />
      </div>
    </div>
  );
}

export default function App() {
  return (
    <div className="relative flex h-[1080px] w-[1920px] flex-col overflow-hidden bg-white font-['Open_Sans',sans-serif] text-black">
      <Defs />
      <TitleBar />
      <MenuBar />
      <ToolControls />
      <div className="flex h-[866px] shrink-0">
        <Toolbox />
        <Workspace />
        <Dock />
        <IconBar items={CMD} />
        <IconBar items={SNAP} />
      </div>
      <Palette />
      <StatusBar />
      <Taskbar />
      <ObjectMenu />
    </div>
  );
}
